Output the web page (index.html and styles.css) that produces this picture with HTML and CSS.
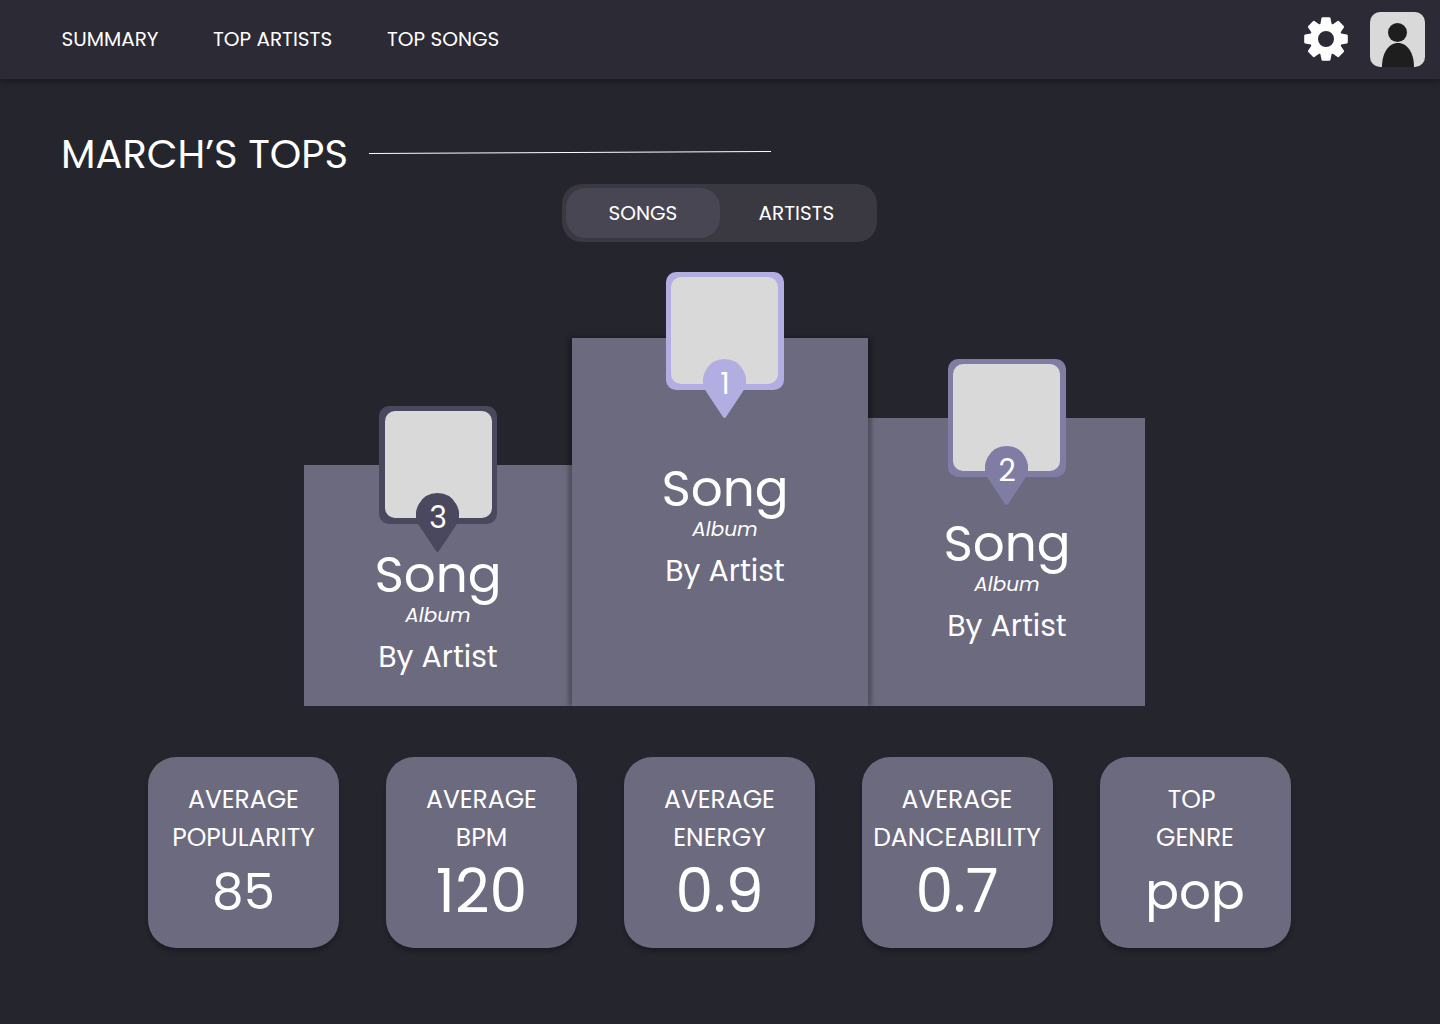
FILE: index.html
```html
<!DOCTYPE html>
<html lang="en">
<head>
<meta charset="utf-8">
<title>March's Tops</title>
<link rel="stylesheet" href="styles.css">
</head>
<body>
<header class="topbar">
  <nav class="nav">
    <a class="nav-summary">SUMMARY</a>
    <a class="nav-artists">TOP ARTISTS</a>
    <a class="nav-songs">TOP SONGS</a>
  </nav>
  <div class="tools">
    <svg class="gear" width="44" height="44" viewBox="-22 -22 44 44" aria-label="Settings">
      <defs><path id="tooth" d="M-5.8-14 L-4.5-20.8 Q-4.3-21.8-3.3-21.8 H3.3 Q4.3-21.8 4.5-20.8 L5.8-14Z"/></defs>
      <g fill="#fff">
        <use href="#tooth"/><use href="#tooth" transform="rotate(45)"/><use href="#tooth" transform="rotate(90)"/><use href="#tooth" transform="rotate(135)"/>
        <use href="#tooth" transform="rotate(180)"/><use href="#tooth" transform="rotate(225)"/><use href="#tooth" transform="rotate(270)"/><use href="#tooth" transform="rotate(315)"/>
      </g>
      <circle r="12" fill="none" stroke="#fff" stroke-width="8"/>
    </svg>
    <svg class="avatar" width="55" height="55" viewBox="0 0 55 55" aria-label="Profile">
      <rect width="55" height="55" rx="10" fill="#d9d9d9"/>
      <circle cx="27.5" cy="20.5" r="9.5" fill="#1e1e1e"/>
      <path d="M12 55C12 41 18.5 31 28 31S44 41 44 55Z" fill="#1e1e1e"/>
    </svg>
  </div>
</header>

<main class="page">
  <div class="heading">
    <h1 class="title">MARCH’S TOPS</h1>
    <svg class="rule" width="402" height="4" viewBox="0 0 402 4"><path d="M0 2.5L402 .5" stroke="#fff" fill="none"/></svg>
  </div>

  <div class="toggle">
    <div class="tab active">SONGS</div>
    <div class="tab">ARTISTS</div>
  </div>

  <section class="podium">
    <article class="step third">
      <div class="cover"><div class="pin"><svg width="43" height="59" viewBox="0 0 43 59"><path d="M21.5 0A21.5 21.5 0 0 1 39.6 33L23 58Q21.5 60 20 58L3.4 33A21.5 21.5 0 0 1 21.5 0Z"/></svg><span>3</span></div></div>
      <h2 class="song">Song</h2>
      <p class="album">Album</p>
      <p class="artist">By Artist</p>
    </article>
    <article class="step first">
      <div class="cover"><div class="pin"><svg width="43" height="59" viewBox="0 0 43 59"><path d="M21.5 0A21.5 21.5 0 0 1 39.6 33L23 58Q21.5 60 20 58L3.4 33A21.5 21.5 0 0 1 21.5 0Z"/></svg><span>1</span></div></div>
      <h2 class="song">Song</h2>
      <p class="album">Album</p>
      <p class="artist">By Artist</p>
    </article>
    <article class="step second">
      <div class="cover"><div class="pin"><svg width="43" height="59" viewBox="0 0 43 59"><path d="M21.5 0A21.5 21.5 0 0 1 39.6 33L23 58Q21.5 60 20 58L3.4 33A21.5 21.5 0 0 1 21.5 0Z"/></svg><span>2</span></div></div>
      <h2 class="song">Song</h2>
      <p class="album">Album</p>
      <p class="artist">By Artist</p>
    </article>
  </section>

  <section class="stats">
    <div class="card"><span class="label">AVERAGE</span><span class="label">POPULARITY</span><span class="value medium">85</span></div>
    <div class="card"><span class="label">AVERAGE</span><span class="label">BPM</span><span class="value">120</span></div>
    <div class="card"><span class="label">AVERAGE</span><span class="label">ENERGY</span><span class="value">0.9</span></div>
    <div class="card nudged"><span class="label">AVERAGE</span><span class="label">DANCEABILITY</span><span class="value">0.7</span></div>
    <div class="card nudged"><span class="label spaced">TOP </span><span class="label">GENRE</span><span class="value medium">pop</span></div>
  </section>
</main>
</body>
</html>
```
FILE: styles.css
```css
* { box-sizing: border-box; margin: 0; padding: 0; }
body {
  width: 1440px;
  height: 1024px;
  overflow: hidden;
  background: #25252d;
  color: #fff;
  font-family: Poppins, Inter, sans-serif;
  font-weight: 400;
}
svg { display: block; }
h1, h2 { font-weight: 400; white-space: nowrap; }

.topbar {
  position: relative;
  height: 79px;
  padding: 0 15px 0 61.5px;
  display: flex;
  align-items: center;
  justify-content: space-between;
  background: #2c2a34;
  box-shadow: 0 4px 4px rgba(0, 0, 0, .25);
}
.nav { display: flex; margin-bottom: 2px; font-size: 20px; line-height: 30px; }
.nav a { width: 151.5px; white-space: nowrap; }
.nav .nav-artists { width: 174px; }
.tools { display: flex; align-items: center; gap: 22px; }
.gear { margin-bottom: 1px; }

.heading { display: flex; height: 105px; padding: 45px 0 0 61px; }
.title { width: 308px; font-size: 40px; line-height: 60px; }
.rule { margin-top: 27px; }

.toggle {
  width: 315px;
  height: 58px;
  margin-left: 562px;
  padding: 4px;
  display: flex;
  border-radius: 20px;
  background: #3a3841;
}
.tab { width: 153.5px; height: 50px; border-radius: 20px; font-size: 20px; line-height: 50px; text-align: center; }
.tab.active { width: 154px; background: #494654; }

.podium { height: 464px; padding-left: 304px; display: flex; align-items: flex-end; }
.step { display: flex; flex-direction: column; align-items: center; background: #6c6a7e; }
.third { --tone: #4a485f; width: 268px; height: 241px; }
.first {
  --tone: #b3aee2;
  position: relative;
  width: 296px;
  height: 368px;
  padding-left: 10px;
  box-shadow: 4px 0 4px rgba(0, 0, 0, .25), -4px 0 4px rgba(0, 0, 0, .25);
  clip-path: inset(-80px -10px 0);
}
.second { --tone: #807da5; width: 277px; height: 288px; padding-left: 1px; }

.cover {
  position: relative;
  flex: none;
  width: 118px;
  height: 118px;
  margin-top: -59px;
  border: 5px solid var(--tone);
  border-width: 5px 6px 6px 5px;
  border-radius: 10px;
  background: var(--tone);
}
.first .cover { margin-top: -66px; }
.third .cover { border-width: 5px 5px 6px 6px; }
.cover::before { content: ""; display: block; height: 107px; border-radius: 10px; background: #d9d9d9; }
.pin { position: absolute; left: 32px; top: 82px; width: 43px; height: 59px; fill: var(--tone); }
.third .pin { left: 31px; }
.pin span { position: absolute; left: 0; top: 0; width: 44px; text-align: center; font-size: 30px; line-height: 49px; }

.song { font-size: 50px; line-height: 60px; margin-top: 22px; }
.album { font-size: 20px; line-height: 22px; margin-top: -1px; font-style: italic; }
.artist { font-size: 30px; line-height: 40px; margin-top: 11px; }
.third .song { margin-top: 21px; }
.second .song { margin-top: 37px; }
.first .song { margin-top: 69px; }

.stats { margin: 51px 0 0 148px; display: flex; gap: 47px; }
.card {
  width: 191px;
  height: 191px;
  padding-top: 24px;
  display: flex;
  flex-direction: column;
  align-items: center;
  border-radius: 28px;
  background: #6c6a7e;
  box-shadow: 0 4px 4px rgba(0, 0, 0, .25);
}
.card.nudged { padding-right: 1px; }
.label { font-size: 25px; line-height: 38px; }
.label.spaced { white-space: pre; }
.value { font-size: 60px; line-height: 68px; }
.value.medium { font-size: 50px; line-height: 70px; }
```
